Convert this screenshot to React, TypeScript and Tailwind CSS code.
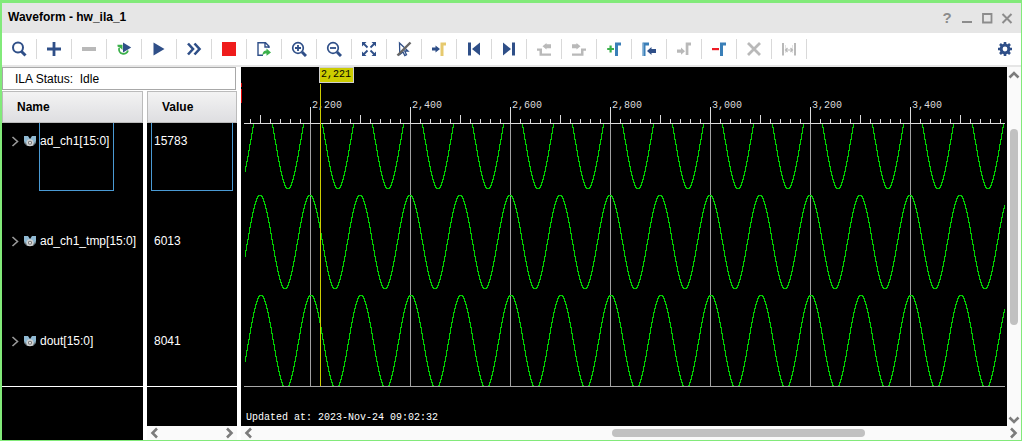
import type { ReactNode } from "react";

const NAVY = "#2f4f88";
const GRAY = "#b9b9b9";
const GREEN = "#3bb04a";
const BLUE = "#3a7fb8";

const marker = "M9 15V1.5h6v3h-3V15z";
const arrowRight = "M1 6.5h3.5V4.5L9 8l-4.5 3.5V9.5H1z";

const tools: { label: string; icon: ReactNode; disabled?: boolean }[] = [
    {
        label: "Search",
        icon: (
            <g fill="none" stroke={NAVY} strokeWidth="2">
                <circle cx="7" cy="6.5" r="5" />
                <path d="M10.5 10.5l4 4" strokeWidth="3" />
            </g>
        ),
    },
    { label: "Add", icon: <path d="M6.6 1h2.8v5.6H15v2.8H9.4V15H6.6V9.4H1V6.6h5.6z" fill={NAVY} /> },
    { label: "Remove", disabled: true, icon: <path d="M1 6h14v4H1z" fill={GRAY} /> },
    {
        label: "Run trigger",
        icon: (
            <>
                <path d="M3.2 7A4.5 4.5 0 1 0 12 9.5" fill="none" stroke={GREEN} strokeWidth="1.8" />
                <path d="M1.5 3.8H6.5V9L4.8 7.2 1.5 5.5z" fill={GREEN} />
                <path d="M7 1.5L15.2 6.5 7 11.5z" fill={NAVY} />
            </>
        ),
    },
    { label: "Run", icon: <path d="M2.5 1.5L13.5 8l-11 6.5z" fill={NAVY} /> },
    {
        label: "Run immediate",
        icon: <path d="M2 2.5L7 8l-5 5.5M8.5 2.5l5 5.5-5 5.5" fill="none" stroke={NAVY} strokeWidth="2.6" />,
    },
    { label: "Stop", icon: <path d="M1 1h14v14H1z" fill="#ef1c1c" /> },
    {
        label: "Export",
        icon: (
            <>
                <path d="M7 14.2H2V1.8h7.5L13 5.3V7M9 2v4h4" fill="none" stroke={NAVY} strokeWidth="1.4" />
                <path d="M6.5 14.5c0-4 2-5 4-5V7.5l4.5 4-4.5 3.3v-2.3c-2 0-3 .5-4 2z" fill={GREEN} />
            </>
        ),
    },
    {
        label: "Zoom in",
        icon: (
            <g fill="none" stroke={NAVY}>
                <circle cx="7" cy="7" r="5.3" strokeWidth="1.7" />
                <path d="M11 11l4 4" strokeWidth="3" />
                <path d="M4 7h6M7 4v6" strokeWidth="1.8" />
            </g>
        ),
    },
    {
        label: "Zoom out",
        icon: (
            <g fill="none" stroke={NAVY}>
                <circle cx="7" cy="7" r="5.3" strokeWidth="1.7" />
                <path d="M11 11l4 4" strokeWidth="3" />
                <path d="M4 7h6" strokeWidth="1.8" />
            </g>
        ),
    },
    {
        label: "Zoom fit",
        icon: (
            <>
                <path d="M1 1h4.5L1 5.5zM15 1v4.5L10.5 1zM1 15v-4.500L5.5 15zM15 15h-4.500L15 10.5z" fill={NAVY} />
                <path d="M2.5 2.5l4 4M13.5 2.5l-4 4M2.5 13.5l4-4M13.5 13.5l-4-4" stroke={NAVY} strokeWidth="1.8" />
            </>
        ),
    },
    {
        label: "Disable cursor",
        icon: (
            <>
                <path d="M3.5 2l8.500 8H8.7l1.8 3.6-1.7.9L7 11l-3.2 2.5z" fill="none" stroke={NAVY} strokeWidth="1.3" />
                <path d="M1.5 14.5L14.5 1.5" stroke="#666" strokeWidth="2.4" />
            </>
        ),
    },
    {
        label: "Go to cursor",
        icon: (
            <>
                <path d={arrowRight} fill={NAVY} />
                <path d="M9.5 15V1.5H15v3h-2.500V15z" fill="#e6c96e" />
            </>
        ),
    },
    { label: "Previous transition", icon: <path d="M2 1.5h3v13H2zM14 1.5v13L6 8z" fill={NAVY} /> },
    { label: "Next transition", icon: <path d="M11 1.5h3v13h-3zM2 1.5v13L10 8z" fill={NAVY} /> },
    {
        label: "Swap left",
        disabled: true,
        icon: <path d="M1 7.5h5v5h9v2.3H3.5v-5H1zM6.5 5.2L10.5 2v1.3H15v4h-4.500v1.3z" fill={GRAY} />,
    },
    {
        label: "Swap right",
        disabled: true,
        icon: <path d="M15 7.5h-5v5H1v2.3h11.500v-5H15zM9.5 5.2L5.5 2v1.3H1v4h4.500v1.3z" fill={GRAY} />,
    },
    {
        label: "Add marker",
        icon: (
            <>
                <path d="M3.5 4.5h2.2v2.4H8V9H5.7v2.5H3.5V9H1.2V6.9h2.3z" fill={GREEN} />
                <path d={marker} fill={BLUE} />
            </>
        ),
    },
    {
        label: "Previous marker",
        icon: (
            <>
                <path d="M1.5 15V1.5H8v3H4.5V15z" fill={BLUE} />
                <path d="M2.2 15V2.3" stroke="#8fb8da" />
                <path d="M6 10l4.500-4v2H15v4h-4.500v2z" fill={NAVY} />
            </>
        ),
    },
    {
        label: "Next marker",
        disabled: true,
        icon: (
            <g fill={GRAY}>
                <path d="M1 8.5h4v-2L9 10.2l-4 3.6v-2H1z" />
                <path d="M9.7 14V1.5H15v3h-2.600V14z" />
            </g>
        ),
    },
    {
        label: "Delete marker",
        icon: (
            <>
                <path d="M1 7h7v2.2H1z" fill="#ee1c25" />
                <path d={marker} fill={BLUE} />
            </>
        ),
    },
    { label: "Delete all", disabled: true, icon: <path d="M2 2l12 12M14 2L2 14" stroke={GRAY} strokeWidth="2.8" /> },
    {
        label: "Measure",
        disabled: true,
        icon: (
            <g stroke={GRAY} fill="none">
                <path d="M2 2v12.5M14 2v12.5" strokeWidth="2" />
                <path d="M4.5 4v8M11.5 4v8" strokeOpacity="0.4" />
                <path d="M4 9h8M6.5 7L4.500 9l2 2M9.5 7l2 2-2 2" strokeWidth="1.2" />
            </g>
        ),
    },
];

const signals = [
    { name: "ad_ch1[15:0]", value: "15783", top: 28, peak: 18, selected: true },
    { name: "ad_ch1_tmp[15:0]", value: "6013", top: 128, peak: 15, selected: false },
    { name: "dout[15:0]", value: "8041", top: 228, peak: 16, selected: false },
];

const PLOT_SPAN = 761;
const PERIOD = 50;
const WAVE_HEIGHT = 93;
const AXIS_Y = 56;
const FIRST_MAJOR = 66;

// One horizontal step per sample column, joined by vertical edges
function wavePath(top: number, peak: number) {
    let d = "";
    for (let x = 0; x < PLOT_SPAN; x++) {
        const phase = (2 * Math.PI * (x - peak)) / PERIOD;
        const y = Math.round(top + (WAVE_HEIGHT * (1 - Math.cos(phase))) / 2) + 0.5;
        d += x === 0 ? `M0.5 ${y}` : `H${x + 0.5}V${y}`;
    }
    return d;
}

const ticks = Array.from({ length: 76 }, (_, i) => {
    const x = 6 + i * 10;
    const offset = x - FIRST_MAJOR;
    return { x, height: offset % 100 === 0 ? 16 : offset % 50 === 0 ? 8 : 4 };
});

const majors = Array.from({ length: 7 }, (_, i) => ({
    x: FIRST_MAJOR + i * 100,
    label: (2200 + i * 200).toLocaleString("en-US"),
}));

function Icon({ children }: { children: ReactNode }) {
    return (
        <svg width="16" height="16" viewBox="0 0 16 16" aria-hidden="true">
            {children}
        </svg>
    );
}

function ScrollArrow({ label, d }: { label: string; d: string }) {
    return (
        <button aria-label={label} className="flex size-4 shrink-0 items-center justify-center">
            <Icon>
                <path d={d} fill="none" stroke="#7c7c7c" strokeWidth="2.6" />
            </Icon>
        </button>
    );
}

const LEFT = "M10 3.5L5.5 8l4.500 4.500";
const RIGHT = "M6 3.5L10.5 8 6 12.5";
const UP = "M3.5 10.5L8 6l4.500 4.500";
const DOWN = "M3.5 7.5L8 12l4.500-4.500";

function SignalIcon() {
    return (
        <svg width="12" height="11" viewBox="0 0 12 11" className="shrink-0" aria-hidden="true">
            <path d="M0 0h4l2 3 2-3h4v6L9 9H3L0 6z" fill="#8fb9d2" />
            <path d="M0 5l3 3h6l3-3v2L9 10H3L0 7z" fill="#6e7f88" />
            <circle cx="6" cy="6.700" r="2.800" fill="#777" stroke="#d0d0d0" strokeWidth="1.5" />
            <circle cx="6" cy="6.700" r="1" fill="#eee" />
        </svg>
    );
}

function TitleBar() {
    return (
        <header className="flex h-[30px] shrink-0 items-center bg-[#e6e6e6] pr-1 pl-1.5 text-[#8c8c8c]">
            <h1 className="flex-1 pb-0.5 text-xs font-bold text-black">Waveform - hw_ila_1</h1>
            <button aria-label="Help" className="w-5 text-[15px] leading-5 font-bold">?</button>
            <button aria-label="Minimize" className="flex w-5 justify-center">
                <Icon><path d="M3 12h10" stroke="currentColor" strokeWidth="2" /></Icon>
            </button>
            <button aria-label="Maximize" className="flex w-5 justify-center">
                <Icon><path d="M4 4h8.500v8.500H4z" fill="none" stroke="currentColor" strokeWidth="1.800" /></Icon>
            </button>
            <button aria-label="Close" className="flex w-5 justify-center">
                <Icon><path d="M3.5 4l9 9M12.5 4l-9 9" stroke="currentColor" strokeWidth="2" /></Icon>
            </button>
        </header>
    );
}

function Toolbar() {
    return (
        <div role="toolbar" className="flex h-[34px] shrink-0 items-center border-b-2 border-[#e6e6e6] bg-white pr-2">
            {tools.map((tool) => (
                <button
                    key={tool.label}
                    aria-label={tool.label}
                    disabled={tool.disabled}
                    className="flex h-5 w-[35px] shrink-0 items-center justify-center border-r border-[#d9d9d9]"
                >
                    <Icon>{tool.icon}</Icon>
                </button>
            ))}
            <button aria-label="Settings" className="ml-auto">
                <Icon>
                    <circle cx="8" cy="8" r="3.900" fill="none" stroke={NAVY} strokeWidth="3" />
                    <path
                        d="M8 1v2.500M8 12.500V15M1 8h2.500M12.500 8H15M3 3l2 2M11 11l2 2M13 3l-2 2M3 13l2-2"
                        stroke={NAVY}
                        strokeWidth="2.600"
                    />
                </Icon>
            </button>
        </div>
    );
}

function SignalPanel() {
    return (
        <div className="flex w-[235px] shrink-0 flex-col">
            <div className="mr-px mb-px h-[23px] border border-[#a8a8a8] pt-px pl-3 text-xs leading-[21px] whitespace-pre">
                ILA Status:  Idle
            </div>
            <table className="w-full table-fixed border-separate border-spacing-0 text-left text-xs">
                <thead>
                    <tr>
                        {["Name", "Value"].map((title, index) => (
                            <th key={title} className={index === 0 ? "w-[145px] p-0 pr-1" : "p-0"}>
                                <div className="h-8 border border-[#bbb] bg-linear-to-b from-[#f3f3f3] to-[#dedee1] pl-3.5 leading-[30px]">
                                    {title}
                                </div>
                            </th>
                        ))}
                    </tr>
                </thead>
                <tbody className="text-white">
                    {signals.map((signal, index) => {
                        const pad = signal.selected ? "pt-[9px]" : "pt-[41px]";
                        const height = ["h-[68px]", "h-[100px]", "h-[96px] border-b border-white"][index];
                        const box = signal.selected ? "h-[68px] border-x border-b border-[#4a9ad4]" : "border-x border-transparent";
                        return (
                            <tr key={signal.name}>
                                <td className="p-0 pr-1">
                                    <div className={`flex items-start overflow-hidden bg-black pl-2 whitespace-nowrap ${height}`}>
                                        <button
                                            aria-label={`Expand ${signal.name}`}
                                            className={`flex w-3.5 shrink-0 ${signal.selected ? "mt-2.5" : "mt-[42px]"}`}
                                        >
                                            <svg width="10" height="16" viewBox="0 0 10 16" aria-hidden="true">
                                                <path d="M2.500 4l5 4.500-5 4.500" fill="none" stroke="#9a9a9a" strokeWidth="1.600" />
                                            </svg>
                                        </button>
                                        <span className={`${signal.selected ? "mt-[13px]" : "mt-[45px]"} mr-[3px]`}>
                                            <SignalIcon />
                                        </span>
                                        <span className={`leading-[18px] ${pad} ${box} ${signal.selected ? "w-[75px]" : ""}`}>
                                            {signal.name}
                                        </span>
                                    </div>
                                </td>
                                <td className="p-0">
                                    <div className={`overflow-hidden bg-black pr-1 pl-1 ${height}`}>
                                        <div className={`pl-0.5 leading-[18px] ${pad} ${box}`}>{signal.value}</div>
                                    </div>
                                </td>
                            </tr>
                        );
                    })}
                </tbody>
            </table>
            <div className="flex flex-1 gap-1">
                <div className="w-[141px] bg-black" />
                <div className="flex flex-1 flex-col bg-black">
                    <div className="mt-auto flex h-3.5 items-center justify-between bg-[#fafafa]">
                        <ScrollArrow label="Scroll values left" d={LEFT} />
                        <ScrollArrow label="Scroll values right" d={RIGHT} />
                    </div>
                </div>
            </div>
        </div>
    );
}

function WavePlot() {
    return (
        <div className="flex min-w-0 flex-1 bg-black">
            {/* Trigger position, off to the left of the visible window */}
            <svg width="3" height="40" shapeRendering="crispEdges" className="shrink-0" aria-hidden="true">
                <path d="M0 16h1v4H0zM0 22h1v14H0z" fill="#e00000" />
            </svg>
            <div className="flex min-w-0 flex-1 flex-col pr-0.5 font-['Liberation_Mono',monospace] text-[10px] text-white">
                <svg width="100%" height="320" shapeRendering="crispEdges" role="img" aria-label="Captured waveforms">
                    {majors.map(({ x, label }) => (
                        <g key={x}>
                            <rect x={x} y={AXIS_Y} width="1" height="264" fill="#a0a0a0" />
                            <text x={x + 2} y="41" fill="#dcdcdc">{label}</text>
                        </g>
                    ))}
                    {ticks.map(({ x, height }) => (
                        <rect key={x} x={x} y={AXIS_Y - height} width="1" height={height} fill="#dcdcdc" />
                    ))}
                    <rect x="0" y={AXIS_Y} width="100%" height="1" fill="#dcdcdc" />
                    <svg x="0" y={AXIS_Y + 1} width="100%" height="262">
                        <g transform={`translate(0 ${-AXIS_Y - 1})`} fill="none" stroke="#00d000">
                            {signals.map((signal) => (
                                <path key={signal.name} d={wavePath(signal.top, signal.peak)} />
                            ))}
                        </g>
                    </svg>
                    <rect x="0" y="319" width="100%" height="1" fill="#a8a8a8" />
                    <rect x="76" y="17" width="1" height="302" fill="#cccc00" />
                    <rect x="75.5" y="0.5" width="34" height="15" fill="#cccc00" stroke="#d0d0d0" />
                    <text x="77" y="10" fill="#000">2,221</text>
                </svg>
                <p className="mt-auto pb-px pl-0.5 leading-[14px] whitespace-nowrap">Updated at: 2023-Nov-24 09:02:32</p>
            </div>
        </div>
    );
}

export default function App() {
    return (
        <main className="flex h-screen min-h-[440px] flex-col overflow-hidden border-t-3 border-r border-b border-l-2 border-[#82ea7a] bg-white font-['Liberation_Sans',Arial,sans-serif] text-black">
            <TitleBar />
            <Toolbar />
            <div className="flex min-h-0 flex-1 gap-1">
                <SignalPanel />
                <div className="flex min-w-0 flex-1 flex-col">
                    <div className="flex min-h-0 flex-1">
                        <WavePlot />
                        <div className="flex w-3.5 flex-col items-center bg-[#fafafa]">
                            <ScrollArrow label="Scroll up" d={UP} />
                            <div className="grow-14" />
                            <div className="w-2 grow-60 rounded-full bg-[#c1c1c1]" />
                            <div className="grow-26" />
                            <ScrollArrow label="Scroll down" d={DOWN} />
                        </div>
                    </div>
                    <div className="flex h-3.5 shrink-0 items-center bg-[#fafafa]">
                        <ScrollArrow label="Scroll left" d={LEFT} />
                        <div className="grow-475" />
                        <div className="h-2 grow-338 rounded-full bg-[#c1c1c1]" />
                        <div className="grow-187" />
                        <ScrollArrow label="Scroll right" d={RIGHT} />
                    </div>
                </div>
            </div>
        </main>
    );
}
